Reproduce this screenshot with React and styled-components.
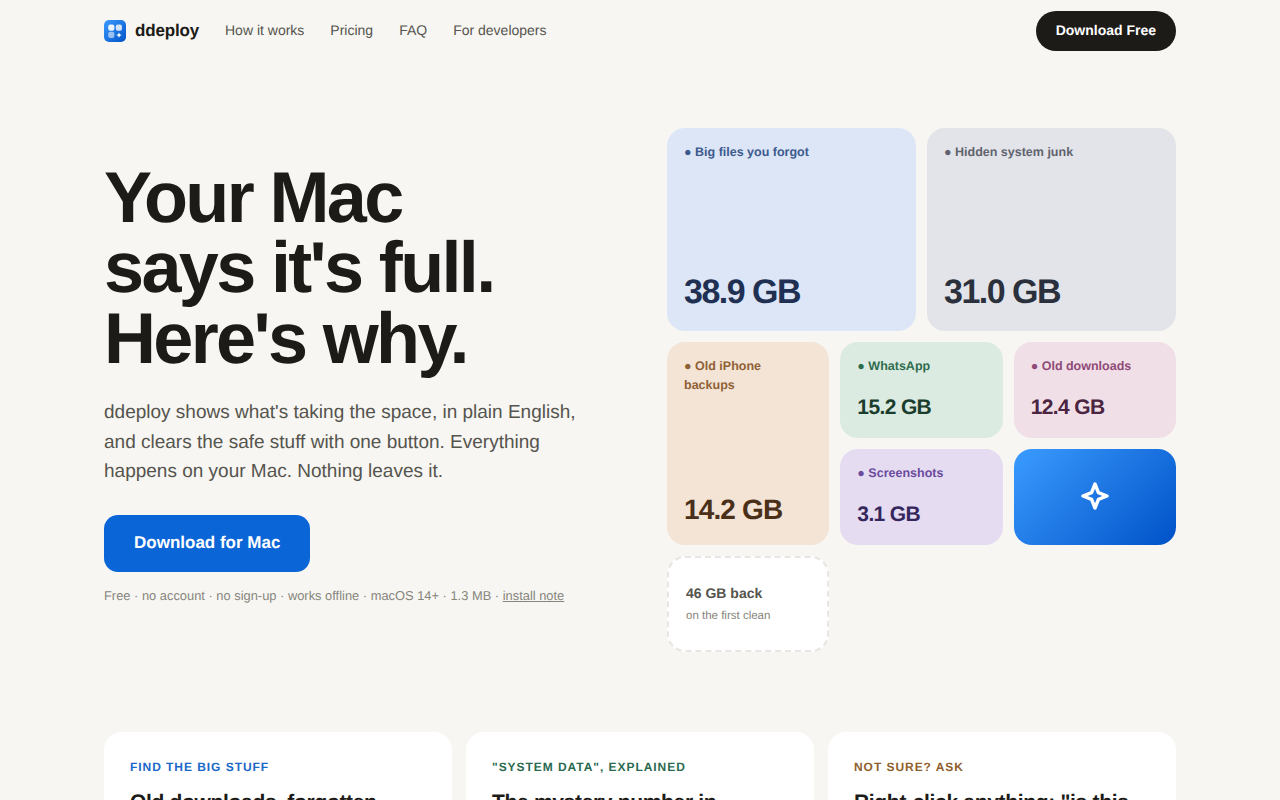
import React from 'react';
import styled, { createGlobalStyle } from 'styled-components';

const GlobalStyle = createGlobalStyle`
  html, body {
    margin: 0;
    padding: 0;
    background: #f7f6f2;
    font-family: "Liberation Sans", Arial, sans-serif;
    color: #1c1b17;
    text-rendering: geometricPrecision;
  }
  #root {
    height: 800px;
    overflow: hidden;
  }
`;

const Page = styled.div`
  width: 1072px;
  margin: 0 auto;
`;

const Nav = styled.nav`
  height: 62px;
  display: flex;
  align-items: center;
  justify-content: space-between;
`;

const NavLeft = styled.div`
  display: flex;
  align-items: center;
  gap: 26px;
`;

const Brand = styled.a`
  display: flex;
  align-items: center;
  gap: 9px;
  font-size: 17px;
  font-weight: 700;
  letter-spacing: -0.17px;
  color: #1c1b17;
`;

const NavLink = styled.a`
  font-size: 14px;
  color: #55544e;
  margin-bottom: 2px;
`;

const NavButton = styled.a`
  box-sizing: border-box;
  background: #1c1b17;
  color: #fff;
  font-size: 14px;
  font-weight: 700;
  height: 40px;
  padding: 0 20px 2px;
  border-radius: 20px;
  display: flex;
  align-items: center;
`;

const Hero = styled.section`
  display: grid;
  grid-template-columns: 1fr 509px;
  gap: 40px;
  align-items: center;
  padding: 66px 0 80px;
`;

const HeroCopy = styled.div`
  padding-bottom: 12px;
`;

const Title = styled.h1`
  margin: 0;
  font-size: 72px;
  line-height: 70.56px;
  font-weight: 700;
  letter-spacing: -2.65px;
  color: #1c1b17;
`;

const Lead = styled.p`
  margin: 24px 0 0;
  font-size: 19px;
  line-height: 29.45px;
  width: 500px;
  color: #55544e;
`;

const Cta = styled.a`
  display: flex;
  align-items: center;
  width: fit-content;
  height: 57px;
  margin-top: 28px;
  padding: 0 30px;
  background: #0a66d6;
  color: #fff;
  font-size: 17px;
  font-weight: 700;
  border-radius: 14px;
`;

const Fine = styled.p`
  margin: 15.5px 0 0;
  font-size: 12.88px;
  line-height: 18px;
  color: #86857c;

  a {
    color: #86857c;
    text-decoration: underline;
  }
`;

const Bento = styled.div`
  display: grid;
  grid-template-columns: repeat(6, 1fr);
  grid-auto-rows: 96px;
  gap: 11px;
`;

const Tile = styled.div`
  grid-column: span ${(p) => p.$cols};
  grid-row: span ${(p) => p.$rows};
  background: ${(p) => p.$bg};
  border-radius: 18px;
  padding: 15px 17px 17px;
  display: flex;
  flex-direction: column;
  justify-content: space-between;
`;

const TileLabel = styled.div`
  font-size: 12.5px;
  line-height: 19px;
  font-weight: 700;
  color: ${(p) => p.$color};
`;

const valueSizes = {
  lg: { size: 34, spacing: -1.5, bottom: 5 },
  md: { size: 28, spacing: -0.85, bottom: 4 },
  sm: { size: 21, spacing: -0.63, bottom: 3 },
};

const TileValue = styled.div`
  font-size: ${(p) => valueSizes[p.$size].size}px;
  line-height: 1;
  font-weight: 700;
  letter-spacing: ${(p) => valueSizes[p.$size].spacing}px;
  color: ${(p) => p.$color};
  margin-bottom: ${(p) => valueSizes[p.$size].bottom}px;
`;

const SparkTile = styled.div`
  grid-column: span 2;
  background: linear-gradient(135deg, #3b9bff, #0052c7);
  border-radius: 18px;
  display: flex;
  align-items: center;
  justify-content: center;
  padding-bottom: 3px;
`;

const NoteTile = styled.div`
  grid-column: span 2;
  background: #fff;
  border: 2px dashed #e8e6e0;
  border-radius: 18px;
  padding: 0 17px 2px;
  display: flex;
  flex-direction: column;
  justify-content: center;
  gap: 9px;
`;

const NoteTitle = styled.div`
  font-size: 14px;
  font-weight: 700;
  color: #55544e;
`;

const NoteSub = styled.div`
  font-size: 11.5px;
  color: #86857c;
`;

const Features = styled.section`
  display: grid;
  grid-template-columns: repeat(3, 1fr);
  gap: 14px;
`;

const Feature = styled.article`
  background: #fff;
  border-radius: 18px;
  padding: 27px 26px;
`;

const Eyebrow = styled.div`
  font-size: 12px;
  line-height: 16px;
  font-weight: 700;
  letter-spacing: 0.95px;
  text-transform: uppercase;
  color: ${(p) => p.$color};
`;

const FeatureTitle = styled.h3`
  margin: 14px 0 0;
  font-size: 21px;
  line-height: 27px;
  font-weight: 700;
  letter-spacing: -0.32px;
  color: #1c1b17;
`;

const LogoIcon = () => (
  <svg width="22" height="22" viewBox="0 0 22 22">
    <defs>
      <linearGradient id="logoBg" x1="0" y1="0" x2="1" y2="1">
        <stop offset="0" stopColor="#3b9bff" />
        <stop offset="1" stopColor="#0052c7" />
      </linearGradient>
    </defs>
    <rect width="22" height="22" rx="5" fill="url(#logoBg)" />
    <rect x="4.2" y="4.5" width="6.2" height="6.2" rx="2" fill="#fff" fillOpacity="0.9" />
    <rect x="11.8" y="4.5" width="6.2" height="6.2" rx="2" fill="#fff" fillOpacity="0.8" />
    <rect x="4.2" y="11.8" width="6.2" height="6.2" rx="2" fill="#fff" fillOpacity="0.55" />
    <path d="M15 12.4l.8 1.9 1.9.8-1.9.8-.8 1.9-.8-1.9-1.9-.8 1.9-.8z" fill="#fff" />
  </svg>
);

const Sparkle = () => (
  <svg width="30" height="30" viewBox="0 0 30 30" fill="none">
    <path
      d="M15 3 L18.4 11.6 L27 15 L18.4 18.4 L15 27 L11.6 18.4 L3 15 L11.6 11.6 Z"
      stroke="#fff"
      strokeWidth="3.4"
      strokeLinejoin="round"
    />
  </svg>
);

export default function App() {
  return (
    <Page>
      <GlobalStyle />
      <Nav>
        <NavLeft>
          <Brand>
            <LogoIcon />
            ddeploy
          </Brand>
          <NavLink>How it works</NavLink>
          <NavLink>Pricing</NavLink>
          <NavLink>FAQ</NavLink>
          <NavLink>For developers</NavLink>
        </NavLeft>
        <NavButton>Download Free</NavButton>
      </Nav>

      <Hero>
        <HeroCopy>
          <Title>
            Your Mac
            <br />
            says it's full.
            <br />
            Here's why.
          </Title>
          <Lead>
            ddeploy shows what's taking the space, in plain English, and clears the safe stuff
            with one button. Everything happens on your Mac. Nothing leaves it.
          </Lead>
          <Cta>Download for Mac</Cta>
          <Fine>
            Free · no account · no sign-up · works offline · macOS 14+ · 1.3 MB · <a>install note</a>
          </Fine>
        </HeroCopy>
        <Bento>
          <Tile $cols={3} $rows={2} $bg="#dce6f6">
            <TileLabel $color="#3d5a8e">● Big files you forgot</TileLabel>
            <TileValue $size="lg" $color="#1f3053">38.9 GB</TileValue>
          </Tile>
          <Tile $cols={3} $rows={2} $bg="#e3e4e9">
            <TileLabel $color="#5f636e">● Hidden system junk</TileLabel>
            <TileValue $size="lg" $color="#2a303c">31.0 GB</TileValue>
          </Tile>
          <Tile $cols={2} $rows={2} $bg="#f3e4d5">
            <TileLabel $color="#8f6035">● Old iPhone backups</TileLabel>
            <TileValue $size="md" $color="#4a3019">14.2 GB</TileValue>
          </Tile>
          <Tile $cols={2} $rows={1} $bg="#dcebe1">
            <TileLabel $color="#2e6b4f">● WhatsApp</TileLabel>
            <TileValue $size="sm" $color="#1b3d2d">15.2 GB</TileValue>
          </Tile>
          <Tile $cols={2} $rows={1} $bg="#f0dfe7">
            <TileLabel $color="#8f4a78">● Old downloads</TileLabel>
            <TileValue $size="sm" $color="#4a2440">12.4 GB</TileValue>
          </Tile>
          <Tile $cols={2} $rows={1} $bg="#e5dcf2">
            <TileLabel $color="#6a4a9c">● Screenshots</TileLabel>
            <TileValue $size="sm" $color="#35275c">3.1 GB</TileValue>
          </Tile>
          <SparkTile>
            <Sparkle />
          </SparkTile>
          <NoteTile>
            <NoteTitle>46 GB back</NoteTitle>
            <NoteSub>on the first clean</NoteSub>
          </NoteTile>
        </Bento>
      </Hero>

      <Features>
        <Feature>
          <Eyebrow $color="#1a68c9">Find the big stuff</Eyebrow>
          <FeatureTitle>Old downloads, forgotten installers, and videos.</FeatureTitle>
        </Feature>
        <Feature>
          <Eyebrow $color="#2a6a4f">"System Data", explained</Eyebrow>
          <FeatureTitle>The mystery number in Settings, broken down.</FeatureTitle>
        </Feature>
        <Feature>
          <Eyebrow $color="#8f5f2e">Not sure? Ask</Eyebrow>
          <FeatureTitle>Right-click anything: "is this safe to delete?"</FeatureTitle>
        </Feature>
      </Features>
    </Page>
  );
}
